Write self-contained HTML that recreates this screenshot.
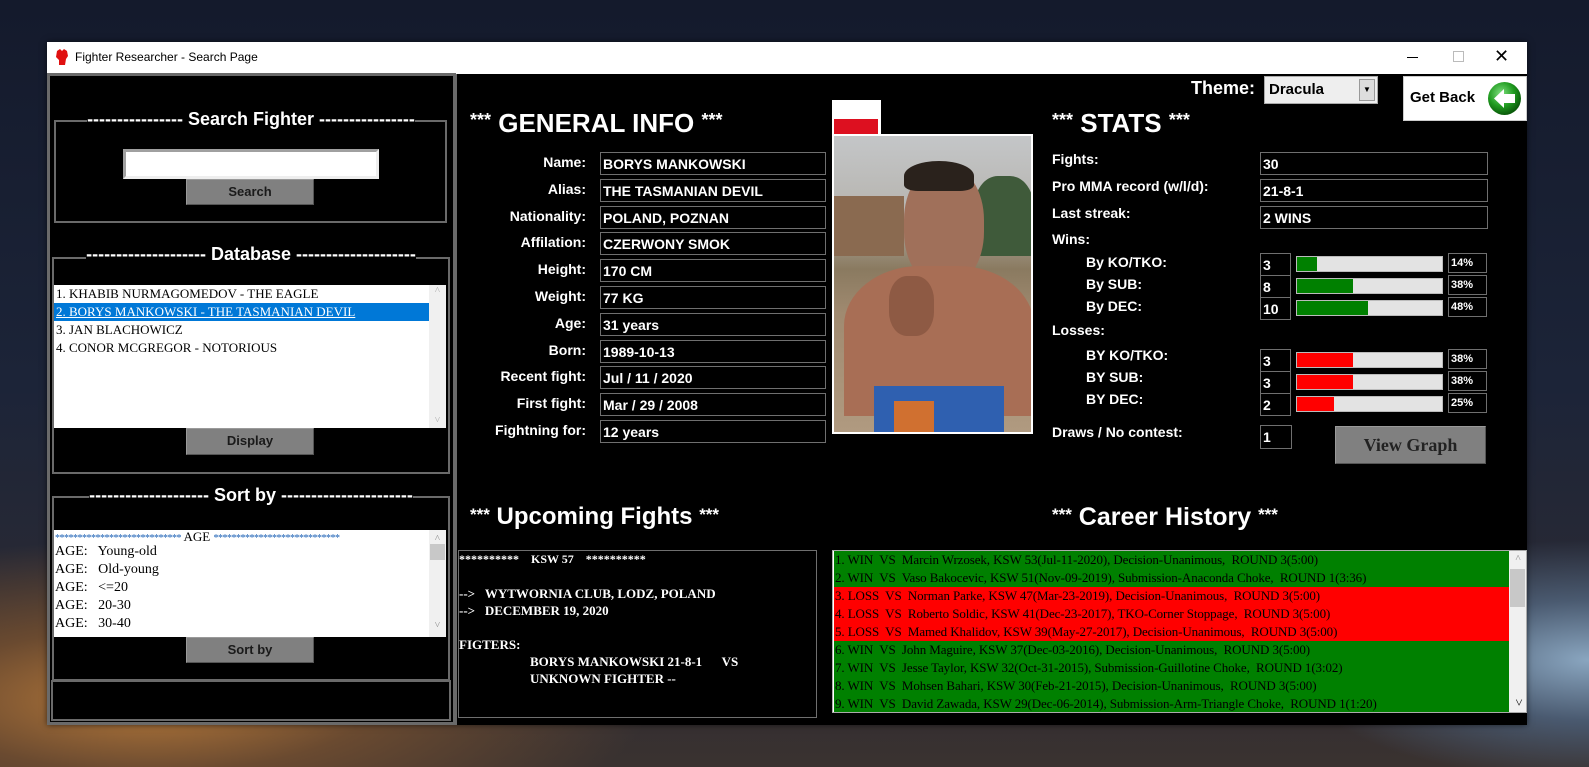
<!DOCTYPE html>
<html style="overflow:hidden;width:1589px;height:767px"><head><meta charset="utf-8">
<style>
*{margin:0;padding:0;box-sizing:border-box}
html,body{width:1589px;height:767px;overflow:hidden}
body{position:relative;font-family:"Liberation Sans",sans-serif;}
#root{position:absolute;left:0;top:0;width:1589px;height:767px;overflow:hidden;
background:radial-gradient(ellipse 500px 160px at 150px 700px,#b87a3a 0%,#6a4a30 45%,transparent 100%),
radial-gradient(ellipse 300px 120px at 1589px 660px,#8aa6c0 0%,#4a5a70 50%,transparent 100%),
linear-gradient(#141a2c 0%,#1c2438 50%,#2a2a34 80%,#3a3230 100%);}
.a{position:absolute}
.w{color:#fff;font-weight:bold}
.box{position:absolute;border:1px solid #6f6f6f;background:#000;color:#fff;font-weight:bold;font-size:14px;padding-left:2px;line-height:22px}
.lbl{position:absolute;color:#fff;font-weight:bold;font-size:14px;text-align:right;width:140px}
.btn{position:absolute;background:#808080;border:1px solid #9a9a9a;border-bottom-color:#555;border-right-color:#555;color:#1a1a1a;font-weight:bold;font-size:13px;text-align:center;line-height:24px}
.gl{position:absolute;color:#fff;font-weight:bold;font-size:18px;white-space:nowrap;text-align:center}
.frame{position:absolute;border:2px solid #6a6a6a}
.lst{position:absolute;background:#fff;font-family:"Liberation Serif",serif;font-size:13px;color:#000;overflow:hidden}
.sl{position:absolute;color:#fff;font-weight:bold;font-size:14px;white-space:nowrap}
.bar{position:absolute;background:#e3e3e3;height:16px;width:147px;border:1px solid #bbb}
.pct{position:absolute;border:1px solid #6f6f6f;color:#fff;font-weight:bold;font-size:11px;width:39px;height:20px;line-height:18px;padding-left:2px}
.ch div{height:18px;line-height:18px;padding-left:1px;white-space:nowrap;font-family:"Liberation Serif",serif;font-size:13px;letter-spacing:-0.1px;color:#000}
.g{background:#008000}.r{background:#ff0000}
.up{position:absolute;color:#fff;font-weight:bold;font-family:"Liberation Serif",serif;font-size:13px;white-space:nowrap}
</style></head><body><div id="root">
<div class="a" style="left:47px;top:42px;width:1480px;height:683px;background:#000;box-shadow:0 0 6px rgba(0,0,0,.6)"></div>
<div class="a" style="left:47px;top:42px;width:1480px;height:32px;background:#fff"></div>
<svg class="a" style="left:54px;top:48px" width="16" height="18" viewBox="0 0 16 18"><path d="M3 3 L6 1 L8 3 L10 1 L13 3 L14 8 L12 11 L11 17 L5 17 L5 12 L2 9 Z" fill="#e01010"/></svg>
<div class="a" style="left:75px;top:50px;font-size:12px;color:#000">Fighter Researcher - Search Page</div>
<div class="a" style="left:1407px;top:57px;width:11px;height:1px;background:#000"></div>
<div class="a" style="left:1453px;top:51px;width:11px;height:11px;border:1px solid #bbb"></div>
<div class="a" style="left:1494px;top:46px;font-size:18px;color:#000;font-weight:300">✕</div>

<div class="a" style="left:47px;top:73px;width:409px;height:652px;border:3px solid #6a6a6a;background:#000"></div>
<div class="frame" style="left:54px;top:120px;width:393px;height:103px"></div>
<div class="gl" style="left:56px;top:109px;width:390px"><span style="background:#000">---------------- Search Fighter ----------------</span></div>
<div class="a" style="left:123px;top:149px;width:256px;height:30px;background:#fff;border:3px solid #a0a0a0;border-right-color:#eee;border-bottom-color:#eee"></div>
<div class="btn" style="left:186px;top:179px;width:128px;height:26px">Search</div>

<div class="frame" style="left:52px;top:257px;width:398px;height:217px"></div>
<div class="gl" style="left:54px;top:244px;width:394px"><span style="background:#000">-------------------- Database --------------------</span></div>
<div class="lst" style="left:54px;top:285px;width:392px;height:143px">
 <div style="position:absolute;left:2px;top:0;line-height:18px">1. KHABIB NURMAGOMEDOV - THE EAGLE</div>
 <div style="position:absolute;left:0;top:18px;width:375px;height:18px;background:#0078d7;color:#fff;line-height:18px;padding-left:2px;text-decoration:underline">2. BORYS MANKOWSKI - THE TASMANIAN DEVIL</div>
 <div style="position:absolute;left:2px;top:36px;line-height:18px">3. JAN BLACHOWICZ</div>
 <div style="position:absolute;left:2px;top:54px;line-height:18px">4. CONOR MCGREGOR - NOTORIOUS</div>
 <div style="position:absolute;right:0;top:0;width:17px;height:143px;background:#f0f0f0;color:#aaa;font-size:10px;text-align:center">˄<div style="position:absolute;bottom:2px;width:17px">˅</div></div>
</div>
<div class="btn" style="left:186px;top:428px;width:128px;height:27px">Display</div>

<div class="frame" style="left:52px;top:496px;width:398px;height:185px"></div>
<div class="gl" style="left:54px;top:485px;width:394px"><span style="background:#000">-------------------- Sort by ----------------------</span></div>
<div class="lst" style="left:54px;top:530px;width:392px;height:107px;font-size:14px;line-height:18px">
 <div style="position:absolute;left:1px;top:-2px;white-space:nowrap;font-size:13px"><span style="color:#1a5fb4;font-size:10px;letter-spacing:-0.5px">****************************</span> AGE <span style="color:#1a5fb4;font-size:10px;letter-spacing:-0.5px">****************************</span></div>
 <div style="position:absolute;left:1px;top:13px;white-space:pre">AGE:   Young-old
AGE:   Old-young
AGE:   &lt;=20
AGE:   20-30
AGE:   30-40</div>
 <div style="position:absolute;right:0;top:0;width:17px;height:107px;background:#f0f0f0;color:#888;font-size:10px;text-align:center">˄<div style="position:absolute;top:14px;left:1px;width:15px;height:16px;background:#c8c8c8"></div><div style="position:absolute;bottom:2px;width:17px">˅</div></div>
</div>
<div class="btn" style="left:186px;top:637px;width:128px;height:26px">Sort by</div>
<div class="frame" style="left:51px;top:680px;width:400px;height:41px"></div>

<div class="a" style="left:453px;top:74px;width:4px;height:651px;background:#6a6a6a"></div>

<div class="a w" style="left:470px;top:108px;font-size:26px;white-space:nowrap"><span style="font-size:18px;vertical-align:6px">***</span> GENERAL INFO <span style="font-size:18px;vertical-align:6px">***</span></div>
<div class="lbl" style="left:446px;top:154px">Name:</div>
<div class="lbl" style="left:446px;top:181px">Alias:</div>
<div class="lbl" style="left:446px;top:208px">Nationality:</div>
<div class="lbl" style="left:446px;top:234px">Affilation:</div>
<div class="lbl" style="left:446px;top:261px">Height:</div>
<div class="lbl" style="left:446px;top:288px">Weight:</div>
<div class="lbl" style="left:446px;top:315px">Age:</div>
<div class="lbl" style="left:446px;top:342px">Born:</div>
<div class="lbl" style="left:446px;top:368px">Recent fight:</div>
<div class="lbl" style="left:446px;top:395px">First fight:</div>
<div class="lbl" style="left:446px;top:422px">Fightning for:</div>
<div class="box" style="left:600px;top:152px;width:226px;height:23px">BORYS MANKOWSKI</div>
<div class="box" style="left:600px;top:179px;width:226px;height:23px">THE TASMANIAN DEVIL</div>
<div class="box" style="left:600px;top:206px;width:226px;height:23px">POLAND, POZNAN</div>
<div class="box" style="left:600px;top:232px;width:226px;height:23px">CZERWONY SMOK</div>
<div class="box" style="left:600px;top:259px;width:226px;height:23px">170 CM</div>
<div class="box" style="left:600px;top:286px;width:226px;height:23px">77 KG</div>
<div class="box" style="left:600px;top:313px;width:226px;height:23px">31 years</div>
<div class="box" style="left:600px;top:340px;width:226px;height:23px">1989-10-13</div>
<div class="box" style="left:600px;top:366px;width:226px;height:23px">Jul / 11 / 2020</div>
<div class="box" style="left:600px;top:393px;width:226px;height:23px">Mar / 29 / 2008</div>
<div class="box" style="left:600px;top:420px;width:226px;height:23px">12 years</div>

<div class="a" style="left:832px;top:100px;width:49px;height:36px;background:#fff"></div>
<div class="a" style="left:834px;top:119px;width:44px;height:16px;background:#dd1020"></div>
<div class="a" style="left:832px;top:134px;width:201px;height:300px;background:#fff;overflow:hidden">
 <div class="a" style="left:2px;top:2px;width:197px;height:296px;background:linear-gradient(#c4c6c8 0%,#b7b5b0 25%,#8a7a60 45%,#a08a70 60%,#b09a80 100%);overflow:hidden">
  <div class="a" style="left:0;top:60px;width:70px;height:60px;background:#8a6a50"></div>
  <div class="a" style="left:140px;top:40px;width:60px;height:80px;background:#3f5a3a;border-radius:40% 40% 0 0"></div>
  <div class="a" style="left:70px;top:30px;width:80px;height:120px;background:#a0705a;border-radius:45%"></div>
  <div class="a" style="left:70px;top:25px;width:70px;height:30px;background:#2a221c;border-radius:50% 50% 20% 20%"></div>
  <div class="a" style="left:10px;top:130px;width:190px;height:150px;background:#a86e55;border-radius:40% 40% 0 0"></div>
  <div class="a" style="left:55px;top:140px;width:45px;height:60px;background:#8e5a44;border-radius:40%"></div>
  <div class="a" style="left:40px;top:250px;width:130px;height:50px;background:#2f60b0"></div>
  <div class="a" style="left:60px;top:265px;width:40px;height:35px;background:#d07030"></div>
 </div>
</div>

<div class="a w" style="left:1191px;top:78px;font-size:18px">Theme:</div>
<div class="a" style="left:1264px;top:76px;width:114px;height:28px;background:#eee;border:1px solid #aaa;font-weight:bold;font-size:15px;line-height:26px;padding-left:4px;color:#000">Dracula
 <div class="a" style="right:2px;top:2px;width:16px;height:22px;background:#ddd;border:1px solid #999;font-size:8px;text-align:center;line-height:20px">▼</div></div>
<div class="a" style="left:1403px;top:76px;width:124px;height:45px;background:#fff;border:1px solid #ccc"></div>
<div class="a" style="left:1410px;top:89px;font-weight:bold;font-size:15px;color:#000">Get Back</div>
<svg class="a" style="left:1487px;top:81px" width="35" height="35" viewBox="0 0 35 35"><defs><radialGradient id="gg" cx="40%" cy="35%" r="65%"><stop offset="0" stop-color="#7fe07f"/><stop offset=".6" stop-color="#1f9a1f"/><stop offset="1" stop-color="#0a5a0a"/></radialGradient></defs><circle cx="17.5" cy="17.5" r="16.5" fill="url(#gg)"/><path d="M7 17.5 L17 8 L17 13 L28 13 L28 22 L17 22 L17 27 Z" fill="#fff"/></svg>

<div class="a w" style="left:1052px;top:108px;font-size:26px;white-space:nowrap"><span style="font-size:18px;vertical-align:6px">***</span> STATS <span style="font-size:18px;vertical-align:6px">***</span></div>
<div class="sl" style="left:1052px;top:151px">Fights:</div>
<div class="sl" style="left:1052px;top:178px">Pro MMA record (w/l/d):</div>
<div class="sl" style="left:1052px;top:205px">Last streak:</div>
<div class="sl" style="left:1052px;top:231px">Wins:</div>
<div class="sl" style="left:1086px;top:254px">By KO/TKO:</div>
<div class="sl" style="left:1086px;top:276px">By SUB:</div>
<div class="sl" style="left:1086px;top:298px">By DEC:</div>
<div class="sl" style="left:1052px;top:322px">Losses:</div>
<div class="sl" style="left:1086px;top:347px">BY KO/TKO:</div>
<div class="sl" style="left:1086px;top:369px">BY SUB:</div>
<div class="sl" style="left:1086px;top:391px">BY DEC:</div>
<div class="sl" style="left:1052px;top:424px">Draws / No contest:</div>
<div class="box" style="left:1260px;top:152px;width:228px;height:23px">30</div>
<div class="box" style="left:1260px;top:179px;width:228px;height:23px">21-8-1</div>
<div class="box" style="left:1260px;top:206px;width:228px;height:23px">2 WINS</div>
<div class="box" style="left:1260px;top:253px;width:31px;height:23px">3</div>
<div class="box" style="left:1260px;top:275px;width:31px;height:23px">8</div>
<div class="box" style="left:1260px;top:297px;width:31px;height:23px">10</div>
<div class="box" style="left:1260px;top:349px;width:31px;height:23px">3</div>
<div class="box" style="left:1260px;top:371px;width:31px;height:23px">3</div>
<div class="box" style="left:1260px;top:393px;width:31px;height:23px">2</div>
<div class="box" style="left:1260px;top:425px;width:32px;height:24px">1</div>
<div class="bar" style="left:1296px;top:256px"><div style="width:20px;height:14px;background:#008000"></div></div>
<div class="bar" style="left:1296px;top:278px"><div style="width:56px;height:14px;background:#008000"></div></div>
<div class="bar" style="left:1296px;top:300px"><div style="width:71px;height:14px;background:#008000"></div></div>
<div class="bar" style="left:1296px;top:352px"><div style="width:56px;height:14px;background:#ff0000"></div></div>
<div class="bar" style="left:1296px;top:374px"><div style="width:56px;height:14px;background:#ff0000"></div></div>
<div class="bar" style="left:1296px;top:396px"><div style="width:37px;height:14px;background:#ff0000"></div></div>
<div class="pct" style="left:1448px;top:253px">14%</div>
<div class="pct" style="left:1448px;top:275px">38%</div>
<div class="pct" style="left:1448px;top:297px">48%</div>
<div class="pct" style="left:1448px;top:349px">38%</div>
<div class="pct" style="left:1448px;top:371px">38%</div>
<div class="pct" style="left:1448px;top:393px">25%</div>
<div class="btn" style="left:1335px;top:426px;width:151px;height:38px;font-family:'Liberation Serif',serif;font-size:18px;line-height:36px;color:#222">View Graph</div>

<div class="a w" style="left:470px;top:503px;font-size:24px;white-space:nowrap"><span style="font-size:17px;vertical-align:4px">***</span> Upcoming Fights <span style="font-size:17px;vertical-align:4px">***</span></div>
<div class="a" style="left:458px;top:550px;width:359px;height:168px;border:1px solid #6f6f6f"></div>
<div class="up" style="left:459px;top:552px;font-size:12px">**********&nbsp;&nbsp;&nbsp;&nbsp;KSW 57&nbsp;&nbsp;&nbsp;&nbsp;**********</div>
<div class="up" style="left:459px;top:586px">--&gt;&nbsp;&nbsp;&nbsp;WYTWORNIA CLUB, LODZ, POLAND</div>
<div class="up" style="left:459px;top:603px">--&gt;&nbsp;&nbsp;&nbsp;DECEMBER 19, 2020</div>
<div class="up" style="left:459px;top:637px">FIGTERS:</div>
<div class="up" style="left:530px;top:654px">BORYS MANKOWSKI 21-8-1&nbsp;&nbsp;&nbsp;&nbsp;&nbsp;&nbsp;VS</div>
<div class="up" style="left:530px;top:671px">UNKNOWN FIGHTER --</div>

<div class="a w" style="left:1052px;top:503px;font-size:25px;white-space:nowrap"><span style="font-size:17px;vertical-align:5px">***</span> Career History <span style="font-size:17px;vertical-align:5px">***</span></div>
<div class="a ch" style="left:832px;top:550px;width:695px;height:163px;border:1px solid #aaa;background:#fff;overflow:hidden">
 <div style="position:absolute;left:0;top:0;width:676px">
 <div class="g">1. WIN&nbsp; VS&nbsp; Marcin Wrzosek, KSW 53(Jul-11-2020), Decision-Unanimous,&nbsp; ROUND 3(5:00)</div>
 <div class="g">2. WIN&nbsp; VS&nbsp; Vaso Bakocevic, KSW 51(Nov-09-2019), Submission-Anaconda Choke,&nbsp; ROUND 1(3:36)</div>
 <div class="r">3. LOSS&nbsp; VS&nbsp; Norman Parke, KSW 47(Mar-23-2019), Decision-Unanimous,&nbsp; ROUND 3(5:00)</div>
 <div class="r">4. LOSS&nbsp; VS&nbsp; Roberto Soldic, KSW 41(Dec-23-2017), TKO-Corner Stoppage,&nbsp; ROUND 3(5:00)</div>
 <div class="r">5. LOSS&nbsp; VS&nbsp; Mamed Khalidov, KSW 39(May-27-2017), Decision-Unanimous,&nbsp; ROUND 3(5:00)</div>
 <div class="g">6. WIN&nbsp; VS&nbsp; John Maguire, KSW 37(Dec-03-2016), Decision-Unanimous,&nbsp; ROUND 3(5:00)</div>
 <div class="g">7. WIN&nbsp; VS&nbsp; Jesse Taylor, KSW 32(Oct-31-2015), Submission-Guillotine Choke,&nbsp; ROUND 1(3:02)</div>
 <div class="g">8. WIN&nbsp; VS&nbsp; Mohsen Bahari, KSW 30(Feb-21-2015), Decision-Unanimous,&nbsp; ROUND 3(5:00)</div>
 <div class="g">9. WIN&nbsp; VS&nbsp; David Zawada, KSW 29(Dec-06-2014), Submission-Arm-Triangle Choke,&nbsp; ROUND 1(1:20)</div>
 </div>
 <div style="position:absolute;right:0;top:0;width:17px;height:161px;background:#f0f0f0;color:#888;font-size:10px;text-align:center;line-height:16px">˄<div style="position:absolute;top:18px;left:1px;width:15px;height:38px;background:#c8c8c8"></div><div style="position:absolute;bottom:0;width:17px">˅</div></div>
</div>
</div></body></html>
